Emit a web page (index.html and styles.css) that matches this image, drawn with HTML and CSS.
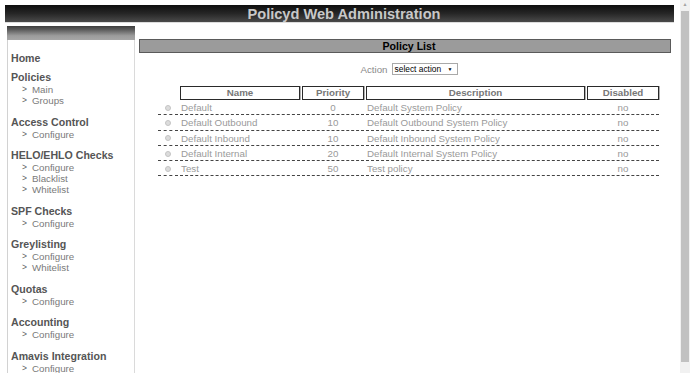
FILE: index.html
```html
<!DOCTYPE html>
<html lang="en">
<head>
    <meta charset="utf-8" />
    <title>Policyd Web Administration</title>
    <link rel="stylesheet" href="styles.css">
</head>
<body>
    <div class="page">
        <div class="banner">Policyd Web Administration</div>

        <div class="layout">
            <div class="sidebar">
                <div class="sidebar-top"></div>
                <div class="menu">
                    <div class="group home">
                        <div class="heading">Home</div>
                    </div>
                    <div class="group">
                        <div class="heading">Policies</div>
                        <div class="item"><span class="arrow">&gt;</span>Main</div>
                        <div class="item"><span class="arrow">&gt;</span>Groups</div>
                    </div>
                    <div class="group">
                        <div class="heading">Access Control</div>
                        <div class="item"><span class="arrow">&gt;</span>Configure</div>
                    </div>
                    <div class="group">
                        <div class="heading">HELO/EHLO Checks</div>
                        <div class="item"><span class="arrow">&gt;</span>Configure</div>
                        <div class="item"><span class="arrow">&gt;</span>Blacklist</div>
                        <div class="item"><span class="arrow">&gt;</span>Whitelist</div>
                    </div>
                    <div class="group">
                        <div class="heading">SPF Checks</div>
                        <div class="item"><span class="arrow">&gt;</span>Configure</div>
                    </div>
                    <div class="group">
                        <div class="heading">Greylisting</div>
                        <div class="item"><span class="arrow">&gt;</span>Configure</div>
                        <div class="item"><span class="arrow">&gt;</span>Whitelist</div>
                    </div>
                    <div class="group">
                        <div class="heading">Quotas</div>
                        <div class="item"><span class="arrow">&gt;</span>Configure</div>
                    </div>
                    <div class="group">
                        <div class="heading">Accounting</div>
                        <div class="item"><span class="arrow">&gt;</span>Configure</div>
                    </div>
                    <div class="group">
                        <div class="heading">Amavis Integration</div>
                        <div class="item"><span class="arrow">&gt;</span>Configure</div>
                    </div>
                </div>
            </div>

            <div class="content">
                <div class="title-bar">Policy List</div>

                <div class="action-row">
                    <span class="action-label">Action</span>
                    <span class="select"><span>select action</span><span class="caret">&#9660;</span></span>
                </div>

                <table class="policies">
                    <colgroup>
                        <col class="col-radio">
                        <col class="col-name">
                        <col class="col-priority">
                        <col class="col-desc">
                        <col class="col-disabled">
                    </colgroup>
                    <thead>
                        <tr>
                            <th class="blank"></th>
                            <th>Name</th>
                            <th>Priority</th>
                            <th>Description</th>
                            <th>Disabled</th>
                        </tr>
                    </thead>
                    <tbody>
                        <tr>
                            <td class="pick"><span class="radio"></span></td>
                            <td>Default</td>
                            <td class="center">0</td>
                            <td>Default System Policy</td>
                            <td class="center">no</td>
                        </tr>
                        <tr>
                            <td class="pick"><span class="radio"></span></td>
                            <td>Default Outbound</td>
                            <td class="center">10</td>
                            <td>Default Outbound System Policy</td>
                            <td class="center">no</td>
                        </tr>
                        <tr>
                            <td class="pick"><span class="radio"></span></td>
                            <td>Default Inbound</td>
                            <td class="center">10</td>
                            <td>Default Inbound System Policy</td>
                            <td class="center">no</td>
                        </tr>
                        <tr>
                            <td class="pick"><span class="radio"></span></td>
                            <td>Default Internal</td>
                            <td class="center">20</td>
                            <td>Default Internal System Policy</td>
                            <td class="center">no</td>
                        </tr>
                        <tr>
                            <td class="pick"><span class="radio"></span></td>
                            <td>Test</td>
                            <td class="center">50</td>
                            <td>Test policy</td>
                            <td class="center">no</td>
                        </tr>
                    </tbody>
                </table>
            </div>
        </div>
    </div>

    <div class="scrollbar">
        <div class="scroll-up">&#9650;</div>
        <div class="scroll-thumb"></div>
    </div>
</body>
</html>
```

FILE: styles.css
```css
html, body {
    margin: 0;
    height: 100%;
    overflow: hidden;
    background: #fff;
}
body {
    font-family: "Liberation Sans", Arial, sans-serif;
}
.page {
    width: 669px;
    padding: 5px 0 0 5px;
}
.banner {
    height: 18px;
    line-height: 18px;
    padding-left: 9px;
    text-align: center;
    font-size: 14.6px;
    font-weight: bold;
    color: #c8c8c8;
    background: linear-gradient(#0e0e0e, #262626 50%, #4a4a4a);
    border-bottom: 1px solid #ddd;
    box-sizing: border-box;
}
.layout {
    display: flex;
    margin-top: 3px;
}
.sidebar {
    width: 128px;
    margin-left: 2px;
    flex-shrink: 0;
}
.sidebar-top {
    height: 14px;
    background: linear-gradient(#3e3e3e, #5a5a5a 25%, #9c9c9c 70%, #a6a6a6);
}
.menu {
    min-height: 400px;
    padding: 12px 0 0 3px;
    border-left: 1px solid #d2d2d2;
    border-right: 1px solid #dadada;
}
.group {
    margin-bottom: 9.5px;
}
.group.home {
    margin-bottom: 6px;
}
.heading {
    height: 13px;
    font-size: 10.6px;
    line-height: 13px;
    font-weight: bold;
    color: #555;
}
.item {
    display: flex;
    align-items: center;
    height: 11px;
    font-size: 9.75px;
    line-height: 11px;
    color: #7a7a7a;
    padding-left: 11px;
}
.arrow {
    width: 10px;
    font-size: 8.5px;
    line-height: 11px;
    color: #606060;
}
.content {
    width: 532px;
    margin-left: 4px;
}
.title-bar {
    margin-top: 13px;
    height: 14px;
    line-height: 12px;
    box-sizing: border-box;
    padding-left: 8px;
    text-align: center;
    font-size: 10.6px;
    font-weight: bold;
    color: #000;
    background: #9b9b9b;
    border: 1px solid #5a5a5a;
}
.action-row {
    margin-top: 10px;
    height: 12px;
    display: flex;
    justify-content: center;
    align-items: center;
    padding-left: 8px;
}
.action-label {
    font-size: 9.75px;
    color: #8a8a8a;
    margin-right: 4px;
}
.select {
    display: flex;
    justify-content: space-between;
    align-items: center;
    width: 66px;
    height: 12px;
    box-sizing: border-box;
    padding: 0 4px 0 2px;
    border: 1px solid #a9a9a9;
    font-size: 8.4px;
    color: #000;
}
.caret {
    font-size: 5px;
}
.policies {
    margin: 11px 0 0 17px;
    width: 505px;
    table-layout: fixed;
    border-collapse: separate;
    border-spacing: 2px 0;
    font-size: 9.75px;
}
.col-radio { width: 20px; }
.col-name { width: 120px; }
.col-priority { width: 62px; }
.col-desc { width: 219px; }
.col-disabled { width: 72px; }
.policies th {
    height: 14px;
    padding: 0;
    box-sizing: border-box;
    line-height: 12px;
    font-weight: bold;
    color: #777;
    border: 1px solid #2a2a2a;
    box-shadow: 1px 0 0 #b0b0b0;
}
.policies th.blank {
    border: none;
    box-shadow: none;
}
.policies td {
    height: 15.3px;
    padding: 1px 0 0 1px;
    box-sizing: border-box;
    line-height: 13px;
    color: #9a9a9a;
    border-bottom: 1px dashed #444;
    white-space: nowrap;
}
.policies td.center {
    text-align: center;
    padding: 1px 0 0 0;
}
.policies td.pick {
    text-align: center;
    padding: 1px 0 0 0;
}
.radio {
    display: inline-block;
    width: 6px;
    height: 6px;
    border-radius: 50%;
    background: #dcdcdc;
    border: 1px solid #c4c4c4;
    vertical-align: 0.5px;
    box-sizing: border-box;
}
.scrollbar {
    position: fixed;
    top: 0;
    right: 0;
    width: 10px;
    height: 100%;
    background: #f1f1f1;
}
.scroll-up {
    height: 9px;
    font-size: 5px;
    line-height: 9px;
    text-align: center;
    color: #a3a3a3;
}
.scroll-thumb {
    margin: 2px 1px 0 1px;
    height: 351px;
    background: #c1c1c1;
}
```
